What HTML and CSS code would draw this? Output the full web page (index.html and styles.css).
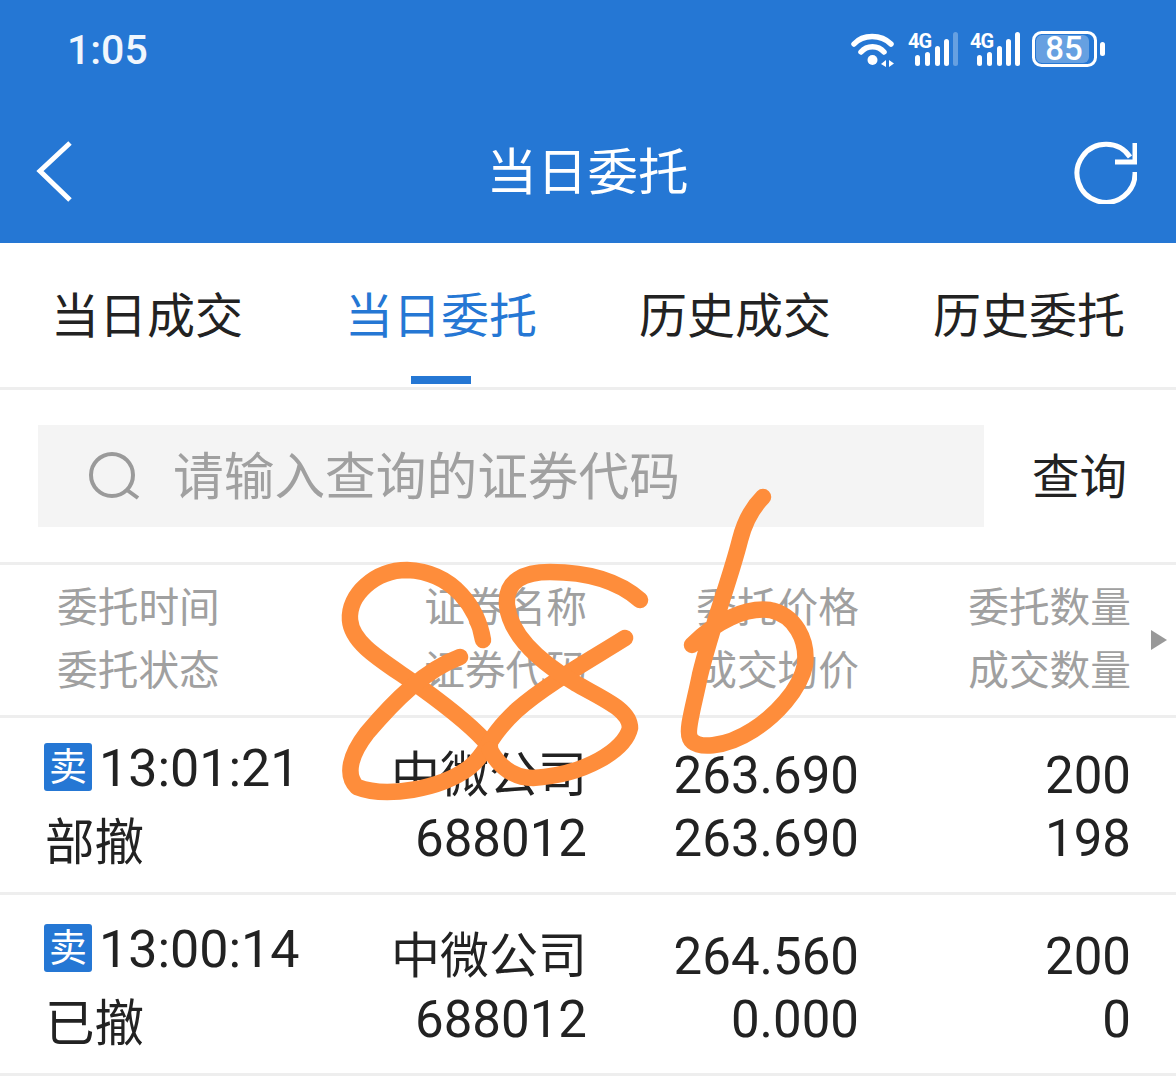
FILE: index.html
```html
<!DOCTYPE html>
<html lang="zh-CN">
<head>
  <meta charset="UTF-8" />
  <title>当日委托</title>
  <link rel="stylesheet" href="styles.css">
</head>
<body>
  <div class="screen">
    <header class="topbar">
      <div class="status">
        <span class="clock">1:05</span>
        <div class="status-icons">
          <svg class="wifi" width="44" height="36" viewBox="0 0 44 36">
            <path d="M3 13 C12 3 30 3 40 13" />
            <path d="M10 21 C16 14 27 14 33 21" />
            <circle cx="21.500" cy="29" r="5" class="fill" />
            <path class="fill" d="M30 33 l5 -4 v7 z M38 29 l5 3.500 -5 3.500 z" />
          </svg>
          <svg class="signal" width="50" height="40" viewBox="0 -2 50 40">
            <text x="0" y="17" class="net">4G</text>
            <rect x="7" y="24" width="5" height="11" rx="2.500" />
            <rect x="17" y="21" width="5" height="14" rx="2.500" />
            <rect x="27" y="15" width="5" height="20" rx="2.500" />
            <rect x="36" y="8" width="5" height="27" rx="2.500" />
            <rect x="45" y="1" width="5" height="34" rx="2.500" opacity="0.3" />
          </svg>
          <svg class="signal" width="50" height="40" viewBox="0 -2 50 40">
            <text x="0" y="17" class="net">4G</text>
            <rect x="7" y="24" width="5" height="11" rx="2.500" />
            <rect x="17" y="21" width="5" height="14" rx="2.500" />
            <rect x="27" y="15" width="5" height="20" rx="2.500" />
            <rect x="36" y="8" width="5" height="27" rx="2.500" />
            <rect x="45" y="1" width="5" height="34" rx="2.500" />
          </svg>
          <svg class="battery" width="74" height="42" viewBox="0 -3 74 42">
            <rect x="4" y="4" width="53" height="28" rx="6" class="level" />
            <rect x="1.500" y="1.500" width="62" height="33" rx="8" class="shell" />
            <rect x="68" y="11" width="5" height="14" rx="2.500" />
            <text x="32" y="29" class="pct">85</text>
          </svg>
        </div>
      </div>
      <div class="navbar">
        <svg class="back" width="40" height="62" viewBox="0 0 40 62">
          <path d="M34 2 L4 30 L34 59" />
        </svg>
        <h1>当日委托</h1>
        <svg class="refresh" width="64" height="64" viewBox="0 0 64 64">
          <path d="M57 17 A29 29 0 1 0 62 32" />
          <path d="M62 3 V22 H42" />
        </svg>
      </div>
    </header>

    <nav class="tabs">
      <a>当日成交</a>
      <a class="active">当日委托</a>
      <a>历史成交</a>
      <a>历史委托</a>
    </nav>

    <div class="search-row">
      <div class="search-box">
        <svg class="search-icon" width="54" height="50" viewBox="0 0 54 50">
          <circle cx="24" cy="24" r="21" />
          <path d="M39 39 L50 47" />
        </svg>
        <span>请输入查询的证券代码</span>
      </div>
      <a class="search-btn">查询</a>
    </div>

    <div class="orders">
      <div class="row head">
        <div class="first">委托时间<br>委托状态</div>
        <div>证券名称<br>证券代码</div>
        <div>委托价格<br>成交均价</div>
        <div>委托数量<br>成交数量</div>
        <span class="more"></span>
      </div>
      <div class="row item">
        <div class="first">
          <p class="time"><span class="badge">卖</span><span class="at">13:01:21</span></p>
          <p class="state">部撤</p>
        </div>
        <div><p class="name">中微公司</p><p>688012</p></div>
        <div><p>263.690</p><p>263.690</p></div>
        <div><p>200</p><p>198</p></div>
      </div>
      <div class="row item">
        <div class="first">
          <p class="time"><span class="badge">卖</span><span class="at">13:00:14</span></p>
          <p class="state">已撤</p>
        </div>
        <div><p class="name">中微公司</p><p>688012</p></div>
        <div><p>264.560</p><p>0.000</p></div>
        <div><p>200</p><p>0</p></div>
      </div>
    </div>

    <!-- 手写的 886 -->
    <svg class="scribble" width="1176" height="1081" viewBox="0 0 1176 1081">
      <path d="M483 640 C478 610 455 572 407 570 C375 570 348 595 350 620 C352 645 385 662 420 687 C445 705 475 728 490 747" />
      <path d="M460 657 C425 670 395 700 367 733 C350 755 345 775 357 787 C385 798 440 790 470 767 C490 750 485 740 517 710 C545 685 590 660 625 638" />
      <path d="M640 600 C615 578 580 572 550 572 C525 572 505 580 507 605 C510 635 540 662 575 683 C605 700 630 710 630 728 C625 750 585 775 533 778 C515 778 500 768 490 750" />
      <path d="M763 497 C752 508 745 520 740 540 C730 580 712 625 700 675 C694 705 686 730 690 738 C695 750 725 748 753 730 C775 716 800 690 805 665 C808 640 795 615 770 610 C745 607 715 622 692 645" />
    </svg>
  </div>
</body>
</html>
```

FILE: styles.css
```css
* {
  box-sizing: border-box;
}
body {
  margin: 0;
  background: white;
  font-family: Roboto, 'Noto Sans CJK SC', sans-serif;
  color: #222;
}
.screen {
  position: relative;
  width: 1176px;
  height: 1081px;
  overflow: hidden;
}

.topbar {
  background: #2577d4;
  height: 243px;
  color: white;
}
.status {
  display: flex;
  justify-content: space-between;
  align-items: center;
  height: 100px;
  padding: 0 70px 0 67px;
}
.clock {
  font-size: 41px;
  font-weight: 500;
  color: #f0f6fd;
}
.status-icons {
  display: flex;
  align-items: center;
  gap: 12px;
  margin-top: -2px;
}
.status-icons svg {
  fill: white;
  display: block;
}
.wifi {
  margin-right: 1px;
}
.wifi path {
  fill: none;
  stroke: white;
  stroke-width: 5.500;
  stroke-linecap: round;
}
.wifi .fill {
  fill: white;
  stroke: none;
}
.net {
  font-size: 20px;
  font-weight: 700;
  letter-spacing: -1px;
}
.battery .shell {
  fill: none;
  stroke: white;
  stroke-width: 3;
}
.battery .level {
  opacity: 0.3;
}
.pct {
  font-size: 33px;
  font-weight: 500;
  text-anchor: middle;
}

.navbar {
  display: flex;
  justify-content: space-between;
  align-items: center;
  height: 143px;
  padding: 0 39px 0 36px;
}
.navbar h1 {
  margin: 0 0 7px 26px;
  font-size: 50.500px;
  font-weight: 400;
}
.back path,
.refresh path {
  fill: none;
  stroke: white;
  stroke-width: 5;
}

.tabs {
  display: grid;
  grid-template-columns: repeat(4, 294px);
  height: 147px;
  border-bottom: 3px solid #eee;
  font-size: 48px;
}
.tabs a {
  position: relative;
  text-align: center;
  line-height: 148px;
}
.tabs .active {
  color: #2577d4;
}
.tabs .active::after {
  content: "";
  position: absolute;
  left: 117px;
  bottom: 7px;
  width: 60px;
  height: 8px;
  background: #2577d4;
}

.search-row {
  display: flex;
  align-items: center;
  justify-content: space-between;
  height: 175px;
  padding: 0 49px 0 38px;
  border-bottom: 3px solid #eee;
}
.search-box {
  display: flex;
  align-items: center;
  gap: 31px;
  width: 946px;
  height: 102px;
  padding-left: 50px;
  background: #f4f4f4;
  color: #a0a0a0;
  font-size: 50.700px;
}
.search-box span {
  padding-bottom: 6px;
}
.search-icon {
  flex-shrink: 0;
}
.search-icon circle,
.search-icon path {
  fill: none;
  stroke: #9a9a9a;
  stroke-width: 4;
}
.search-btn {
  padding-bottom: 6px;
  font-size: 47.500px;
}

.row {
  position: relative;
  display: grid;
  grid-template-columns: 300px 242px 272px 272px;
  padding: 0 44px 0 45px;
  border-bottom: 3px solid #eee;
  text-align: right;
}
.row .first {
  text-align: left;
}
.head {
  height: 153px;
  padding-top: 12px;
  color: #a0a0a0;
  font-size: 40.700px;
  line-height: 63px;
}
.head .first {
  padding-left: 12px;
}
.more {
  position: absolute;
  right: 9px;
  top: 65px;
  border-left: 16px solid #999;
  border-top: 10px solid transparent;
  border-bottom: 10px solid transparent;
}
.item {
  height: 177px;
  padding-top: 26px;
  font-size: 51px;
  line-height: 63px;
}
.item + .item {
  height: 181px;
  padding-top: 30px;
}
.item p {
  margin: 0;
}
.item .name {
  font-size: 49px;
}
.item .time {
  display: flex;
  align-items: center;
  height: 54px;
  margin-top: -4px;
  font-size: 52px;
}
.at {
  padding-top: 3px;
}
.badge {
  width: 48px;
  height: 48px;
  margin: 0 7px 0 -1px;
  border-radius: 3px;
  background: #2577d4;
  color: white;
  font-size: 38px;
  line-height: 48px;
  text-align: center;
}
.item .state {
  margin-top: 18px;
  font-size: 49.500px;
}

.scribble {
  position: absolute;
  left: 0;
  top: 0;
  pointer-events: none;
}
.scribble path {
  fill: none;
  stroke: #fe8d3b;
  stroke-width: 16.500;
  stroke-linecap: round;
  stroke-linejoin: round;
}
```
